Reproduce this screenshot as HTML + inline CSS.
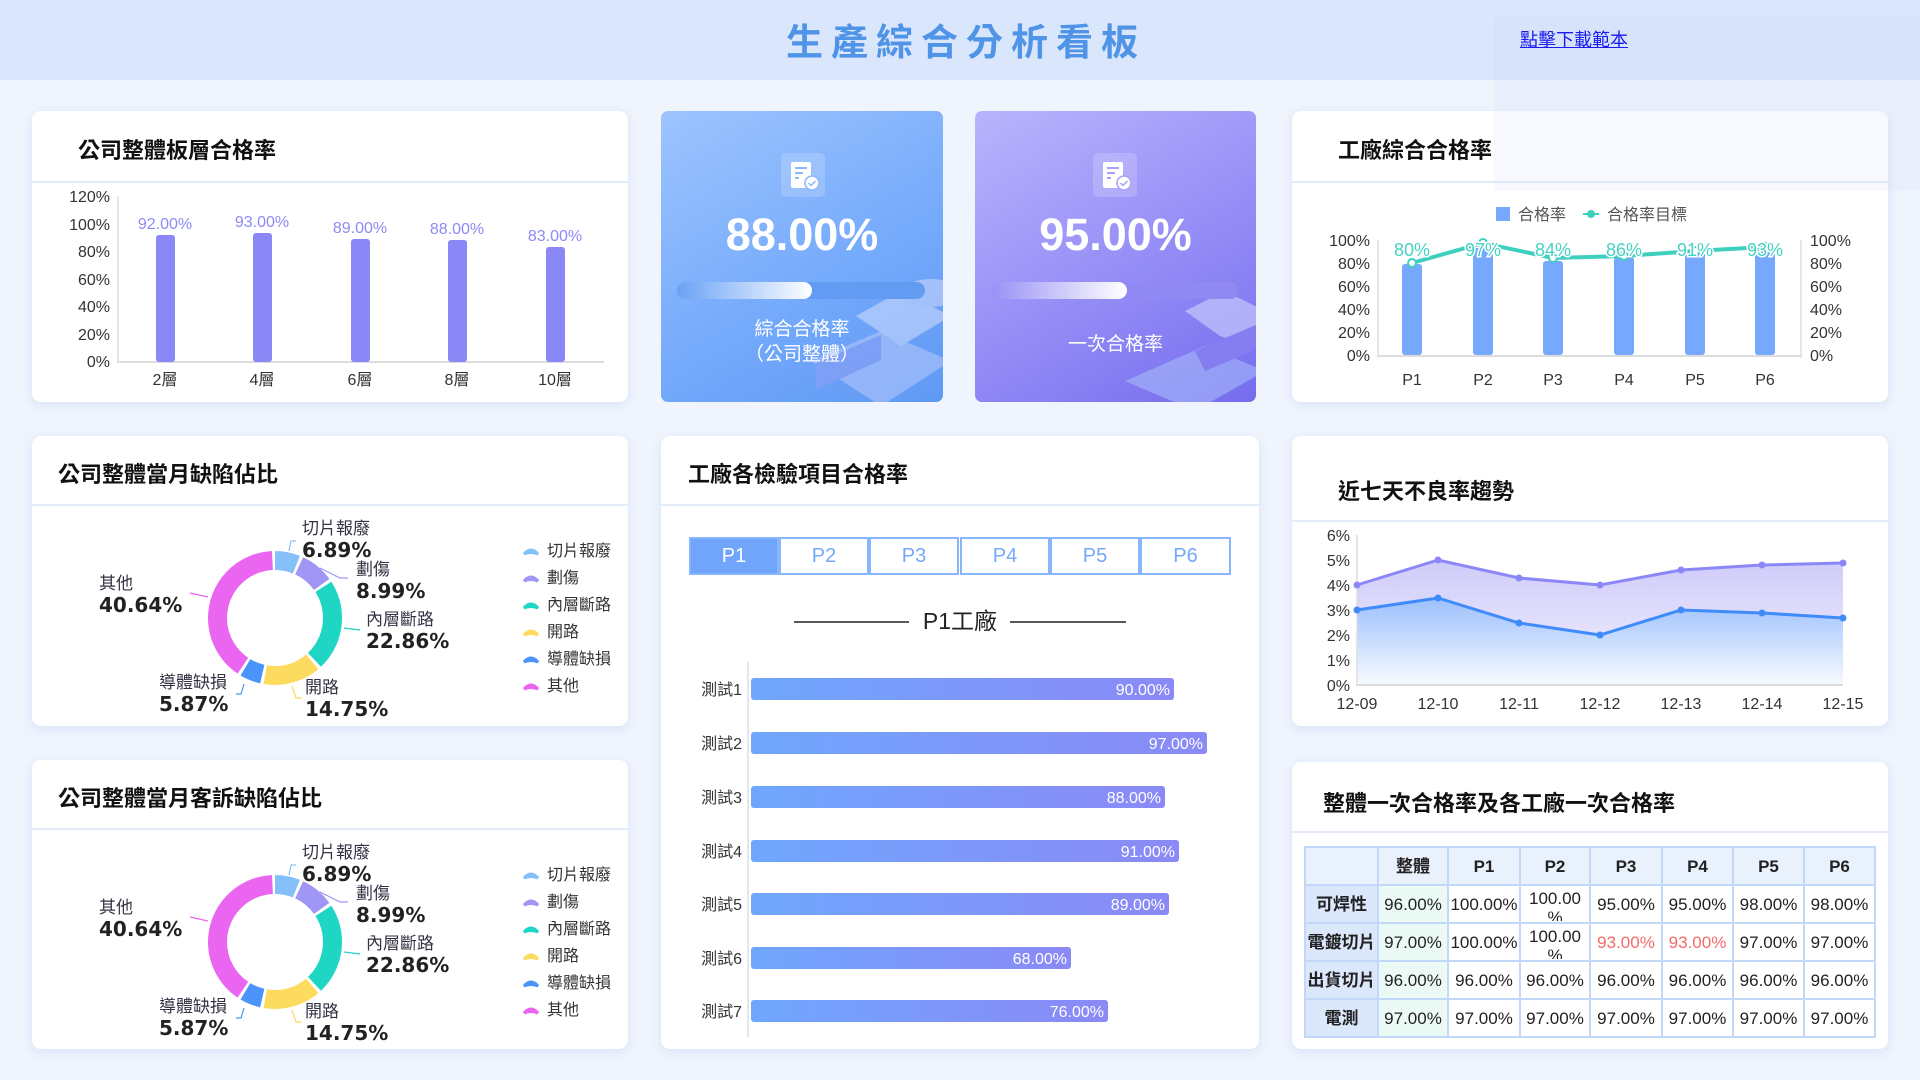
<!DOCTYPE html>
<html><head><meta charset="utf-8"><style>
*{margin:0;padding:0;box-sizing:border-box}
body{width:1920px;height:1080px;background:#eff4fd;font-family:"Liberation Sans","Noto Sans CJK TC",sans-serif;position:relative;overflow:hidden}
.hdr{position:absolute;left:0;top:0;width:1920px;height:80px;background:#d9e6fc}
.ttl{position:absolute;left:6px;width:1920px;top:12px;text-align:center;font-size:37px;font-weight:bold;color:#4f94e6;letter-spacing:8px;font-family:"Noto Sans CJK TC",sans-serif}
.lnk{position:absolute;left:1520px;top:26px;font-size:18px;color:#0000ee;text-decoration:underline;font-family:"Noto Sans CJK TC",sans-serif}
.card{position:absolute;background:#fff;border-radius:9px;box-shadow:0 3px 10px rgba(120,150,220,.18)}
.ct{position:absolute;font-size:22px;font-weight:bold;color:#111;font-family:"Noto Sans CJK TC",sans-serif}
.dv{position:absolute;left:0;right:0;height:2px;background:#e3ebf8}
.kpi{position:absolute;border-radius:7px;overflow:hidden;color:#fff;text-align:center;font-family:"Noto Sans CJK TC",sans-serif}
table{position:absolute;left:1304px;top:846px;border-collapse:collapse;font-size:17px;font-family:"Liberation Sans","Noto Sans CJK TC",sans-serif;color:#222;table-layout:fixed}
td{border:2px solid #c2d8f8;height:38px;text-align:center;padding:0;overflow:hidden;line-height:19px}
tr:first-child td{background:#e9f1fd;font-weight:bold}
td:first-child{background:#dbe8fc;font-weight:bold}
td:nth-child(2){background:#ecfaf5}
tr:first-child td:nth-child(2){background:#e9f1fd}
.w{display:block;height:34px;overflow:hidden;padding-top:2px}
.r{color:#f46a6a}
.tab{position:absolute;top:537px;height:38px;width:90px;border:2px solid #8ab6fb;background:#fff;color:#74a8fa;font-size:20px;text-align:center;line-height:34px}
</style></head><body>
<div class="hdr"></div>
<div class="ttl">生產綜合分析看板</div>
<div class="lnk">點擊下載範本</div>

<div class="card" style="left:32px;top:111px;width:596px;height:291px"><div class="ct" style="left:46px;top:22px">公司整體板層合格率</div><div class="dv" style="top:70px"></div></div>
<div class="card" style="left:1292px;top:111px;width:596px;height:291px"><div class="ct" style="left:46px;top:22px">工廠綜合合格率</div><div class="dv" style="top:70px"></div></div>
<div class="card" style="left:32px;top:436px;width:596px;height:290px"><div class="ct" style="left:26px;top:21px">公司整體當月缺陷佔比</div><div class="dv" style="top:68px"></div></div>
<div class="card" style="left:32px;top:760px;width:596px;height:289px"><div class="ct" style="left:26px;top:21px">公司整體當月客訴缺陷佔比</div><div class="dv" style="top:68px"></div></div>
<div class="card" style="left:661px;top:436px;width:598px;height:613px"><div class="ct" style="left:27px;top:21px">工廠各檢驗項目合格率</div><div class="dv" style="top:68px"></div></div>
<div class="card" style="left:1292px;top:436px;width:596px;height:290px"><div class="ct" style="left:46px;top:38px">近七天不良率趨勢</div><div class="dv" style="top:84px"></div></div>
<div class="card" style="left:1292px;top:762px;width:596px;height:287px"><div class="ct" style="left:31px;top:24px">整體一次合格率及各工廠一次合格率</div><div class="dv" style="top:69px"></div></div>

<div class="kpi" style="left:661px;top:111px;width:282px;height:291px;background:linear-gradient(150deg,#9dc4fe,#74a9fb 60%,#5f99f4)">
<svg width="282" height="291" style="position:absolute;left:0;top:0">
<g opacity=".55"><path d="M150 250 l70 -30 l70 30 l-70 45z" fill="#b8c8fb"/><path d="M195 205 l45 -25 l50 25 l-50 30z" fill="#d5defe"/><path d="M155 252 l65 -28 v25 l-65 30z" fill="#8f9ef5"/><ellipse cx="270" cy="182" rx="30" ry="14" fill="#cfd8fd"/></g>
<rect x="120" y="42" width="44" height="44" rx="5" fill="rgba(255,255,255,.18)"/>
<rect x="130" y="51" width="20" height="26" rx="2" fill="#fff"/><rect x="134" y="56" width="12" height="2" fill="#8db8fb"/><rect x="134" y="61" width="8" height="2" fill="#8db8fb"/><rect x="134" y="66" width="4" height="2" fill="#8db8fb"/><circle cx="151" cy="72" r="7" fill="#fff" stroke="#8db8fb" stroke-width="1.5"/><path d="M147.5 72 l2.5 2.5 l4.5 -4.5" stroke="#8db8fb" stroke-width="1.5" fill="none"/>
<rect x="16" y="171" width="248" height="17" rx="8.5" fill="#629cf2"/>
<rect x="16" y="171" width="135" height="17" rx="8.5" fill="url(#pb1)"/>
<defs><linearGradient id="pb1"><stop offset="0" stop-color="#6aa2f5"/><stop offset="1" stop-color="#fff"/></linearGradient><linearGradient id="pb2"><stop offset="0" stop-color="#9a92f5"/><stop offset="1" stop-color="#fff"/></linearGradient></defs>
</svg>
<div style="position:absolute;left:0;width:282px;top:98px;font-size:45px;font-weight:bold;font-family:'Liberation Sans',sans-serif">88.00%</div>
<div style="position:absolute;left:0;width:282px;top:204px;font-size:19px;line-height:25px">綜合合格率<br>（公司整體）</div>
</div>
<div class="kpi" style="left:975px;top:111px;width:281px;height:291px;background:linear-gradient(150deg,#bab4fd,#958df6 55%,#756cee)">
<svg width="281" height="291" style="position:absolute;left:0;top:0">
<g opacity=".55"><path d="M150 270 l80 -35 l60 25 l-70 40z" fill="#a9c0fa"/><path d="M210 200 l40 -20 l40 20 v40 l-45 -15z" fill="#d8dcfe"/><path d="M220 240 l70 -30 v25 l-60 25z" fill="#8a83f0"/></g>
<rect x="118" y="42" width="44" height="44" rx="5" fill="rgba(255,255,255,.18)"/>
<rect x="128" y="51" width="20" height="26" rx="2" fill="#fff"/><rect x="132" y="56" width="12" height="2" fill="#a6a0f8"/><rect x="132" y="61" width="8" height="2" fill="#a6a0f8"/><rect x="132" y="66" width="4" height="2" fill="#a6a0f8"/><circle cx="149" cy="72" r="7" fill="#fff" stroke="#a6a0f8" stroke-width="1.5"/><path d="M145.5 72 l2.5 2.5 l4.5 -4.5" stroke="#a6a0f8" stroke-width="1.5" fill="none"/>
<rect x="17" y="171" width="247" height="17" rx="8.5" fill="#9088f3"/>
<rect x="17" y="171" width="135" height="17" rx="8.5" fill="url(#pb2)"/>
</svg>
<div style="position:absolute;left:0;width:281px;top:98px;font-size:45px;font-weight:bold;font-family:'Liberation Sans',sans-serif">95.00%</div>
<div style="position:absolute;left:0;width:281px;top:218px;font-size:19px">一次合格率</div>
</div>

<div class="tab" style="left:689px;background:#70a5fb;color:#fff">P1</div>
<div class="tab" style="left:779px">P2</div>
<div class="tab" style="left:869px">P3</div>
<div class="tab" style="left:960px">P4</div>
<div class="tab" style="left:1050px">P5</div>
<div class="tab" style="left:1140px;width:91px">P6</div>

<svg width="1920" height="1080" style="position:absolute;left:0;top:0" font-family="Liberation Sans, Noto Sans CJK TC, sans-serif">
<defs>
<linearGradient id="hb" x1="0" x2="1"><stop offset="0" stop-color="#6fa7fd"/><stop offset="1" stop-color="#8b89f6"/></linearGradient>
<linearGradient id="ap" x1="0" y1="0" x2="0" y2="1"><stop offset="0" stop-color="#cfcbfa"/><stop offset="1" stop-color="#f3f2fe"/></linearGradient>
<linearGradient id="ab" x1="0" y1="0" x2="0" y2="1"><stop offset="0" stop-color="#9cc0fd"/><stop offset="1" stop-color="#f8faff"/></linearGradient>
</defs>
<g font-size="16" fill="#333" text-anchor="end">
<text x="110" y="202">120%</text><text x="110" y="230">100%</text><text x="110" y="257">80%</text><text x="110" y="285">60%</text><text x="110" y="312">40%</text><text x="110" y="340">20%</text><text x="110" y="367">0%</text></g>
<line x1="118" y1="196" x2="118" y2="363" stroke="#ddd" stroke-width="1.5"/>
<line x1="117" y1="362" x2="604" y2="362" stroke="#ddd" stroke-width="2"/>
<g fill="#8a88f7"><rect x="156" y="235" width="19" height="127" rx="3"/><rect x="253" y="233" width="19" height="129" rx="3"/><rect x="351" y="239" width="19" height="123" rx="3"/><rect x="448" y="240" width="19" height="122" rx="3"/><rect x="546" y="247" width="19" height="115" rx="3"/></g>
<g font-size="16" fill="#8d8af5" text-anchor="middle"><text x="165" y="229">92.00%</text><text x="262" y="227">93.00%</text><text x="360" y="233">89.00%</text><text x="457" y="234">88.00%</text><text x="555" y="241">83.00%</text></g>
<g font-size="16" fill="#333" text-anchor="middle"><text x="165" y="385">2層</text><text x="262" y="385">4層</text><text x="360" y="385">6層</text><text x="457" y="385">8層</text><text x="555" y="385">10層</text></g>
<rect x="1496" y="207" width="14" height="14" fill="#76a8fd"/><text x="1518" y="220" font-size="16" fill="#555">合格率</text>
<line x1="1583" y1="214" x2="1599" y2="214" stroke="#3ecfbf" stroke-width="2"/><circle cx="1591" cy="214" r="4" fill="#3ecfbf"/><text x="1607" y="220" font-size="16" fill="#555">合格率目標</text>
<g font-size="16" fill="#333" text-anchor="end"><text x="1370" y="246">100%</text><text x="1370" y="269">80%</text><text x="1370" y="292">60%</text><text x="1370" y="315">40%</text><text x="1370" y="338">20%</text><text x="1370" y="361">0%</text></g>
<g font-size="16" fill="#333"><text x="1810" y="246">100%</text><text x="1810" y="269">80%</text><text x="1810" y="292">60%</text><text x="1810" y="315">40%</text><text x="1810" y="338">20%</text><text x="1810" y="361">0%</text></g>
<line x1="1378" y1="240" x2="1378" y2="358" stroke="#ddd" stroke-width="1.5"/><line x1="1801" y1="240" x2="1801" y2="358" stroke="#ddd" stroke-width="1.5"/>
<line x1="1378" y1="356" x2="1801" y2="356" stroke="#ddd" stroke-width="2"/>
<g fill="#76a8fd"><rect x="1402" y="264" width="20" height="91" rx="3"/><rect x="1473" y="248" width="20" height="107" rx="3"/><rect x="1543" y="261" width="20" height="94" rx="3"/><rect x="1614" y="257" width="20" height="98" rx="3"/><rect x="1685" y="252" width="20" height="103" rx="3"/><rect x="1755" y="250" width="20" height="105" rx="3"/></g>
<polyline points="1412,263 1483,243 1553,258 1624,256 1695,251 1765,247" fill="none" stroke="#3ecfbf" stroke-width="4"/>
<g fill="#fff" stroke="#3ecfbf" stroke-width="2"><circle cx="1412" cy="263" r="4"/><circle cx="1483" cy="243" r="4"/><circle cx="1553" cy="258" r="4"/><circle cx="1624" cy="256" r="4"/><circle cx="1695" cy="251" r="4"/><circle cx="1765" cy="247" r="4"/></g>
<g font-size="18" fill="#46d2c2" text-anchor="middle" stroke="#fff" stroke-width="3" paint-order="stroke"><text x="1412" y="256">80%</text><text x="1483" y="256">97%</text><text x="1553" y="256">84%</text><text x="1624" y="256">86%</text><text x="1695" y="256">91%</text><text x="1765" y="256">93%</text></g>
<g font-size="16" fill="#333" text-anchor="middle"><text x="1412" y="385">P1</text><text x="1483" y="385">P2</text><text x="1553" y="385">P3</text><text x="1624" y="385">P4</text><text x="1695" y="385">P5</text><text x="1765" y="385">P6</text></g>
<g id="dn">
<g transform="rotate(-90 275 618)" fill="none" stroke-width="19">
<circle cx="275" cy="618" r="57.5" stroke="#85c0fb" stroke-dasharray="21.9 400" stroke-dashoffset="0"/>
<circle cx="275" cy="618" r="57.5" stroke="#a096f5" stroke-dasharray="29.5 400" stroke-dashoffset="-24.9"/>
<circle cx="275" cy="618" r="57.5" stroke="#1fd6c4" stroke-dasharray="79.6 400" stroke-dashoffset="-57.4"/>
<circle cx="275" cy="618" r="57.5" stroke="#fddb5e" stroke-dasharray="50.3 400" stroke-dashoffset="-140"/>
<circle cx="275" cy="618" r="57.5" stroke="#4b95fa" stroke-dasharray="18.2 400" stroke-dashoffset="-193.3"/>
<circle cx="275" cy="618" r="57.5" stroke="#ea66f1" stroke-dasharray="143.8 400" stroke-dashoffset="-214.5"/>
</g>
<g fill="none" stroke-width="1.2"><polyline points="289,551 291,541 296,541" stroke="#85c0fb"/><polyline points="320,568 340,578 348,578" stroke="#a096f5"/><polyline points="344,628 360,630" stroke="#1fd6c4"/><polyline points="292,686 296,698 302,698" stroke="#fddb5e"/><polyline points="244,684 241,694 236,694" stroke="#4b95fa"/><polyline points="208,597 190,593" stroke="#ea66f1"/></g>
<g font-size="17" fill="#334"><text x="302" y="534">切片報廢</text><text x="356" y="575">劃傷</text><text x="366" y="625">內層斷路</text><text x="305" y="693">開路</text><text x="159" y="688">導體缺損</text><text x="99" y="589">其他</text></g>
<g font-size="20" font-weight="bold" fill="#222" font-family="DejaVu Sans, sans-serif"><text x="302" y="557">6.89%</text><text x="356" y="598">8.99%</text><text x="366" y="648">22.86%</text><text x="305" y="716">14.75%</text><text x="159" y="711">5.87%</text><text x="99" y="612">40.64%</text></g>
<g><path d="M524 554 q7 -8 14 0 q-7 -3 -14 0z" fill="#85c0fb" stroke="#85c0fb" stroke-width="3"/><path d="M524 581 q7 -8 14 0 q-7 -3 -14 0z" fill="#a096f5" stroke="#a096f5" stroke-width="3"/><path d="M524 608 q7 -8 14 0 q-7 -3 -14 0z" fill="#1fd6c4" stroke="#1fd6c4" stroke-width="3"/><path d="M524 635 q7 -8 14 0 q-7 -3 -14 0z" fill="#fddb5e" stroke="#fddb5e" stroke-width="3"/><path d="M524 662 q7 -8 14 0 q-7 -3 -14 0z" fill="#4b95fa" stroke="#4b95fa" stroke-width="3"/><path d="M524 689 q7 -8 14 0 q-7 -3 -14 0z" fill="#ea66f1" stroke="#ea66f1" stroke-width="3"/></g>
<g font-size="16" fill="#333"><text x="547" y="556">切片報廢</text><text x="547" y="583">劃傷</text><text x="547" y="610">內層斷路</text><text x="547" y="637">開路</text><text x="547" y="664">導體缺損</text><text x="547" y="691">其他</text></g>
</g>
<use href="#dn" transform="translate(0 324)"/>
<line x1="794" y1="622" x2="909" y2="622" stroke="#222" stroke-width="1.5"/><line x1="1010" y1="622" x2="1126" y2="622" stroke="#222" stroke-width="1.5"/>
<text x="960" y="629" font-size="23" fill="#222" text-anchor="middle">P1工廠</text>
<line x1="748" y1="662" x2="748" y2="1037" stroke="#ddd" stroke-width="1.5"/>
<g fill="url(#hb)"><rect x="751" y="678" width="423" height="22" rx="3"/><rect x="751" y="732" width="456" height="22" rx="3"/><rect x="751" y="786" width="414" height="22" rx="3"/><rect x="751" y="840" width="428" height="22" rx="3"/><rect x="751" y="893" width="418" height="22" rx="3"/><rect x="751" y="947" width="320" height="22" rx="3"/><rect x="751" y="1000" width="357" height="22" rx="3"/></g>
<g font-size="16" fill="#fff" text-anchor="end"><text x="1170" y="695">90.00%</text><text x="1203" y="749">97.00%</text><text x="1161" y="803">88.00%</text><text x="1175" y="857">91.00%</text><text x="1165" y="910">89.00%</text><text x="1067" y="964">68.00%</text><text x="1104" y="1017">76.00%</text></g>
<g font-size="16" fill="#333" text-anchor="end"><text x="742" y="695">測試1</text><text x="742" y="749">測試2</text><text x="742" y="803">測試3</text><text x="742" y="857">測試4</text><text x="742" y="910">測試5</text><text x="742" y="964">測試6</text><text x="742" y="1017">測試7</text></g>
<g font-size="16" fill="#333" text-anchor="end"><text x="1350" y="541">6%</text><text x="1350" y="566">5%</text><text x="1350" y="591">4%</text><text x="1350" y="616">3%</text><text x="1350" y="641">2%</text><text x="1350" y="666">1%</text><text x="1350" y="691">0%</text></g>
<path d="M1357 585 L1438 560 L1519 578 L1600 585 L1681 570 L1762 565 L1843 563 L1843 685 L1357 685Z" fill="url(#ap)"/>
<path d="M1357 610 L1438 598 L1519 623 L1600 635 L1681 610 L1762 613 L1843 618 L1843 685 L1357 685Z" fill="url(#ab)"/>
<line x1="1357" y1="535" x2="1357" y2="686" stroke="#ddd" stroke-width="1.5"/><line x1="1357" y1="685" x2="1843" y2="685" stroke="#ddd" stroke-width="2"/>
<polyline points="1357,585 1438,560 1519,578 1600,585 1681,570 1762,565 1843,563" fill="none" stroke="#8c87f7" stroke-width="3"/>
<polyline points="1357,610 1438,598 1519,623 1600,635 1681,610 1762,613 1843,618" fill="none" stroke="#3f8bfa" stroke-width="3"/>
<g fill="#8c87f7"><circle cx="1357" cy="585" r="3.5"/><circle cx="1438" cy="560" r="3.5"/><circle cx="1519" cy="578" r="3.5"/><circle cx="1600" cy="585" r="3.5"/><circle cx="1681" cy="570" r="3.5"/><circle cx="1762" cy="565" r="3.5"/><circle cx="1843" cy="563" r="3.5"/></g>
<g fill="#3f8bfa"><circle cx="1357" cy="610" r="3.5"/><circle cx="1438" cy="598" r="3.5"/><circle cx="1519" cy="623" r="3.5"/><circle cx="1600" cy="635" r="3.5"/><circle cx="1681" cy="610" r="3.5"/><circle cx="1762" cy="613" r="3.5"/><circle cx="1843" cy="618" r="3.5"/></g>
<g font-size="16" fill="#333" text-anchor="middle"><text x="1357" y="709">12-09</text><text x="1438" y="709">12-10</text><text x="1519" y="709">12-11</text><text x="1600" y="709">12-12</text><text x="1681" y="709">12-13</text><text x="1762" y="709">12-14</text><text x="1843" y="709">12-15</text></g>
</svg>

<table>
<colgroup><col style="width:73px"><col style="width:70px"><col style="width:72px"><col style="width:70px"><col style="width:72px"><col style="width:71px"><col style="width:71px"><col style="width:71px"></colgroup>
<tr><td></td><td>整體</td><td>P1</td><td>P2</td><td>P3</td><td>P4</td><td>P5</td><td>P6</td></tr>
<tr><td>可焊性</td><td>96.00%</td><td>100.00%</td><td><span class="w">100.00<br>%</span></td><td>95.00%</td><td>95.00%</td><td>98.00%</td><td>98.00%</td></tr>
<tr><td>電鍍切片</td><td>97.00%</td><td>100.00%</td><td><span class="w">100.00<br>%</span></td><td class="r">93.00%</td><td class="r">93.00%</td><td>97.00%</td><td>97.00%</td></tr>
<tr><td>出貨切片</td><td>96.00%</td><td>96.00%</td><td>96.00%</td><td>96.00%</td><td>96.00%</td><td>96.00%</td><td>96.00%</td></tr>
<tr><td>電測</td><td>97.00%</td><td>97.00%</td><td>97.00%</td><td>97.00%</td><td>97.00%</td><td>97.00%</td><td>97.00%</td></tr>
</table>
<div style="position:absolute;left:1494px;top:17px;width:426px;height:174px;background:rgba(190,210,250,.13)"></div>
</body></html>
